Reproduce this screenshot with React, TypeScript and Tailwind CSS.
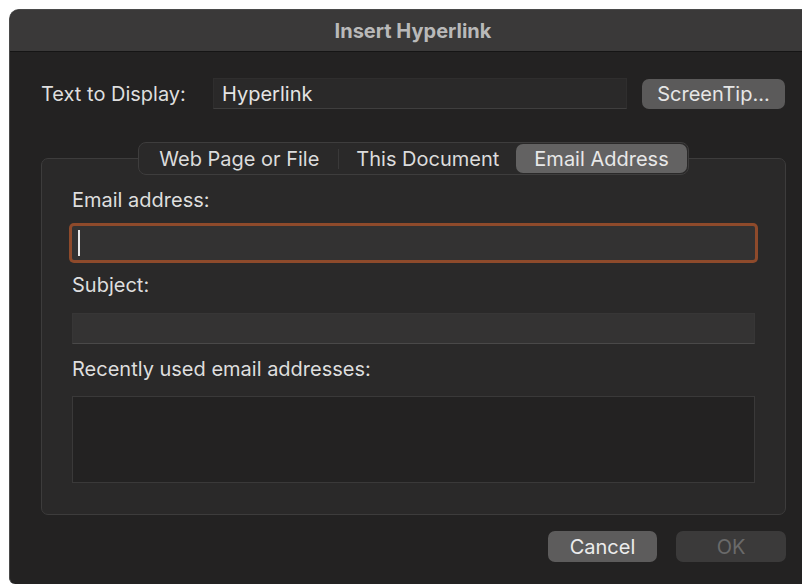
import React from 'react';

const font = { fontFamily: 'Inter, "Noto Sans", sans-serif' };

function TabSwitch() {
  const tabs = ['Web Page or File', 'This Document', 'Email Address'];
  const active = 2;
  return (
    <div className="mx-auto -mt-[17px] flex h-[33px] items-center rounded-[8px] border border-[#3e3d3d] bg-[#2a2929] p-[1px]">
      {tabs.map((t, i) => (
        <React.Fragment key={t}>
          {i === 1 && <div className="h-[20px] w-px bg-[#3a3939]" />}
          <div
            className={
              i === active
                ? 'flex h-full items-center rounded-[7px] bg-[#636262] px-[18px] text-[#e8e8e8]'
                : i === 0
                  ? 'flex h-full items-center px-[19px] text-[#dcdcdc]'
                  : 'flex h-full items-center px-[17px] text-[#dcdcdc]'
            }>
            {t}
          </div>
        </React.Fragment>
      ))}
    </div>
  );
}

export default function App() {
  return (
    <div
      className="flex h-[584px] w-[802px] bg-white pl-[9px] pt-[9px] text-[20px] leading-[20px]"
      style={font}>
      <div className="flex flex-1 flex-col overflow-hidden rounded-tl-[10px] rounded-bl-[6px] border-l border-t border-[#4a4a4a] bg-[#232222]">
        <div className="flex h-[42px] shrink-0 items-center justify-center border-b border-[#151515] bg-[#3a3939] pl-[14px] text-[20px] font-bold text-[#b9b9b9]">
          Insert Hyperlink
        </div>

        <div className="flex flex-col pl-[31px] pr-[16px] pt-[26px]">
          <div className="flex h-[31px] items-center">
            <span className="w-[172px] text-[#dedede]">Text to Display:</span>
            <div className="flex h-[31px] w-[414px] items-center border border-[#2f2e2e] border-b-[#3f3e3e] bg-[#2a2929] pl-[8px] text-[#e4e4e4]">
              Hyperlink
            </div>
            <button className="ml-[15px] h-[30px] w-[143px] rounded-[7px] bg-[#5b5a5a] text-[#e6e6e6]">
              ScreenTip...
            </button>
          </div>

          <div className="mt-[49px] flex w-[745px] flex-col rounded-[7px] border border-[#3d3c3c] bg-[#2a2929] px-[30px] pb-[31px]">
            <TabSwitch />

            <span className="mt-[15px] text-[#dedede]">Email address:</span>
            <div className="mt-[16px] flex h-[34px] items-center rounded-[2px] bg-[#333232] pl-[6px] shadow-[0_0_0_3px_#8e4a2b]">
              <div className="h-[26px] w-[2px] bg-[#e8e8e8]" />
            </div>

            <span className="mt-[15px] text-[#dedede]">Subject:</span>
            <div className="mt-[18px] h-[31px] border border-[#373636] border-b-[#4a4949] bg-[#343333]" />

            <span className="mt-[15px] text-[#dedede]">Recently used email addresses:</span>
            <div className="mt-[17px] h-[87px] border border-[#3a3939] bg-[#232222]" />
          </div>

          <div className="mt-[16px] flex w-[745px] justify-end gap-[19px]">
            <button className="h-[31px] w-[109px] rounded-[7px] bg-[#5d5c5c] text-[#ececec]">
              Cancel
            </button>
            <button className="h-[31px] w-[110px] rounded-[7px] bg-[#3b3a3a] text-[#6a6a6a]">
              OK
            </button>
          </div>
        </div>
      </div>
    </div>
  );
}
